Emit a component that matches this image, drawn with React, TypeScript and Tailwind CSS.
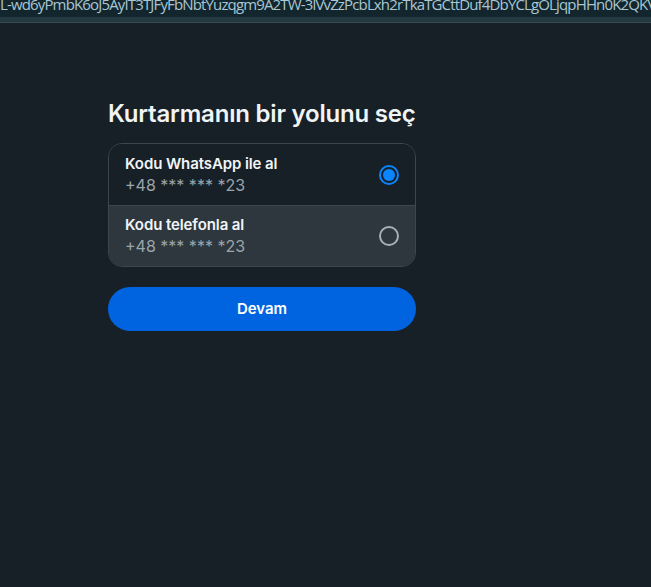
import { useState } from "react";

const OPTIONS = [
  { id: "whatsapp", title: "Kodu WhatsApp ile al", phone: "+48 *** *** *23" },
  { id: "phone", title: "Kodu telefonla al", phone: "+48 *** *** *23" },
];

function Radio({ checked }: { checked: boolean }) {
  return checked ? (
    <span className="flex h-5 w-5 items-center justify-center rounded-full border-2 border-[#0a84ff]">
      <span className="h-[12px] w-[12px] rounded-full bg-[#0a84ff]" />
    </span>
  ) : (
    <span className="h-5 w-5 rounded-full border-2 border-[#a7b0b6]" />
  );
}

export default function App() {
  const [selected, setSelected] = useState("whatsapp");

  return (
    <div className="min-h-[587px] bg-[#172027] font-['Inter',sans-serif] text-white">
      {/* url strip left over from the address bar */}
      <div className="h-[17px] overflow-hidden bg-[#13262e]">
        <div className="-mt-[6px] whitespace-nowrap font-['Open_Sans',sans-serif] text-[15px] leading-[20px] tracking-[-0.85px] text-[#a9c6d2]">
          L-wd6yPmbK6oJ5AyIT3TJFyFbNbtYuzqgm9A2TW-3lVvZzPcbLxh2rTkaTGCttDuf4DbYCLgOLjqpHHn0K2QKV
        </div>
      </div>
      <div className="h-[6px] border-b border-[#3a4a51] bg-[#243a41]" />

      <div className="ml-[108px] w-[308px] pt-[75px]">
        <h1 className="text-[24px] font-semibold leading-[32px] tracking-[-0.2px] text-[#f1f4f6]">
          Kurtarmanın bir yolunu seç
        </h1>

        <div className="mt-[13px] overflow-hidden rounded-[14px] border border-[#3b464e]">
          {OPTIONS.map((opt, i) => {
            const active = selected === opt.id;
            return (
              <button
                key={opt.id}
                type="button"
                onClick={() => setSelected(opt.id)}
                className={`flex h-[61px] w-full items-center justify-between pl-[16px] pr-[16px] text-left ${
                  i > 0 ? "border-t border-[#3b464e]" : ""
                } ${active ? "bg-[#172027]" : "bg-[#2d373d]"}`}
              >
                <div className="flex flex-col">
                  <span className="text-[15px] font-semibold leading-[20px] tracking-[-0.1px] text-[#f1f4f6]">
                    {opt.title}
                  </span>
                  <span className="text-[16px] leading-[22px] text-[#9aa5ac]">{opt.phone}</span>
                </div>
                <Radio checked={active} />
              </button>
            );
          })}
        </div>

        <button
          type="button"
          className="mt-[20px] flex h-[44px] w-full items-center justify-center rounded-full bg-[#0064e0] text-[15px] font-semibold text-white"
        >
          Devam
        </button>
      </div>
    </div>
  );
}
